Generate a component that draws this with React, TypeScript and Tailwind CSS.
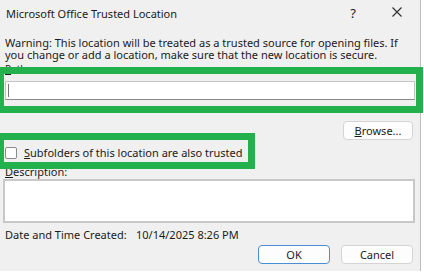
import React from "react";

const font = { fontFamily: '"Segoe UI", "Noto Sans", "Open Sans", sans-serif' };

const Btn = ({ children, focused }: { children: React.ReactNode; focused?: boolean }) => (
  <button
    className={
      focused
        ? "w-[72px] h-[19px] rounded-[4px] bg-[#fdfdfd] border-[1.5px] border-[#4a8fd6] text-[11px] text-[#1b1b1b] leading-none"
        : "w-[72px] h-[19px] rounded-[4px] bg-[#fdfdfd] border border-[#d4d4d4] text-[11px] text-[#1b1b1b] leading-none"
    }
  >
    {children}
  </button>
);

export default function App() {
  return (
    <div className="relative w-[424px] h-[277px] bg-white overflow-hidden" style={font}>
      <div className="w-[421px] h-[271px] bg-[#f0f0f0] border-r border-[#bdbdbd] flex flex-col text-[#1b1b1b]">
        {/* title bar */}
        <div className="h-[26px] flex items-center pl-[6px] pr-[18px] shrink-0">
          <span className="text-[11px] leading-none">Microsoft Office Trusted Location</span>
          <span className="ml-auto text-[13px] leading-none mr-[36px]">?</span>
          <svg width="10" height="10" viewBox="0 0 10 10" className="mb-[2px]">
            <path d="M0.5 0.5 L9.5 9.5 M9.5 0.5 L0.5 9.5" stroke="#333" strokeWidth="1.2" />
          </svg>
        </div>

        {/* warning */}
        <p className="mt-[11px] px-[5px] text-[11px] leading-[12px]">
          Warning: This location will be treated as a trusted source for opening files. If
          <br />
          you change or add a location, make sure that the new location is secure.
        </p>

        {/* path, mostly hidden under the green box */}
        <div className="mt-[3px] px-[5px] h-[10px] text-[10px] leading-[10px]">
          <span className="underline">P</span>ath:
        </div>
        <div className="mt-[7px] mx-[5px] w-[410px] h-[19px] bg-white border border-[#c4c4c4] border-b-[#8a8a8a] flex items-center pl-[2px]">
          <div className="w-px h-[13px] bg-[#777]" />
        </div>

        {/* browse */}
        <div className="mt-[21px] flex justify-end pr-[7px]">
          <button className="w-[70px] h-[19px] rounded-[4px] bg-[#fdfdfd] border border-[#d4d4d4] text-[11px] leading-none">
            <span className="underline">B</span>rowse...
          </button>
        </div>

        {/* checkbox */}
        <div className="mt-[6px] h-[13px] flex items-center pl-[5px] gap-[7px]">
          <div className="w-[12px] h-[12px] rounded-[2px] border border-[#8a8a8a] bg-white" />
          <span className="text-[11px] leading-none">
            <span className="underline">S</span>ubfolders of this location are also trusted
          </span>
        </div>

        {/* description */}
        <div className="mt-[7px] px-[5px] h-[12px] text-[11px] leading-[12px]">
          <span className="underline">D</span>escription:
        </div>
        <div className="mt-[1px] mx-[3px] w-[412px] h-[44px] bg-white border-2 border-[#c8c8c8]" />

        {/* date */}
        <div className="mt-[5px] h-[12px] flex items-center pl-[5px] text-[11px] leading-none">
          <span className="w-[131px]">Date and Time Created:</span>
          <span>10/14/2025 8:26 PM</span>
        </div>

        {/* buttons */}
        <div className="mt-[5px] flex justify-end gap-[11px] pr-[7px]">
          <Btn focused>OK</Btn>
          <Btn>Cancel</Btn>
        </div>
      </div>

      {/* annotation boxes */}
      <div className="absolute left-[-3px] top-[67px] w-[426px] h-[46px] border-[7px] border-[#22b14c]" />
      <div className="absolute left-[-3px] top-[133px] w-[258px] h-[36px] border-[7px] border-[#22b14c]" />
    </div>
  );
}
